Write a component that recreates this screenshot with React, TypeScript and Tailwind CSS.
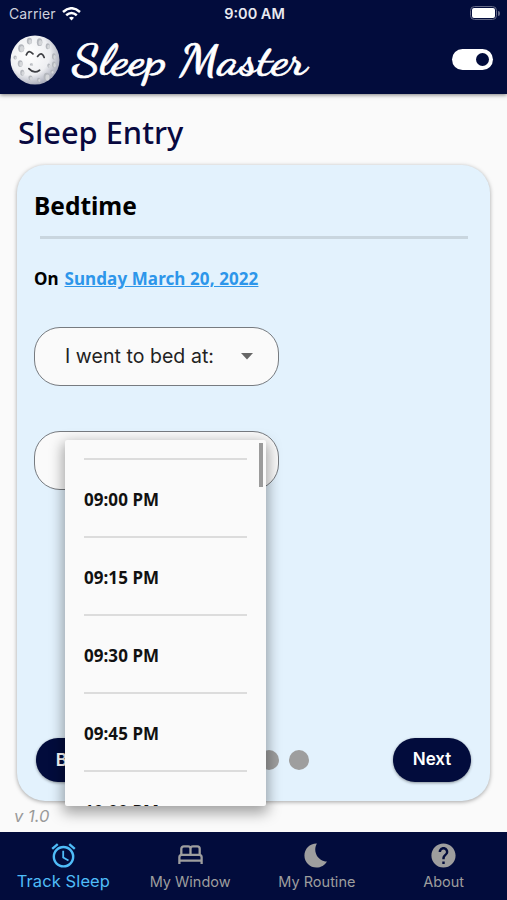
import type { ComponentType } from 'react';
import { MdAlarm, MdBedtime, MdHelp } from 'react-icons/md';
import clsx from 'clsx';

const times = ['09:00 PM', '09:15 PM', '09:30 PM', '09:45 PM', '10:00 PM'];

const BedIcon = ({ size = 24 }: { size?: number | string }) => (
  <svg width={size} height={size} viewBox="0 0 24 24" fill="none" stroke="currentColor" strokeWidth="1.9">
    <path d="M2.800 19v-5.500a2 2 0 0 1 2-2h14.400a2 2 0 0 1 2 2V19M3 16.200h18" />
    <path d="M4.400 11.500V6.500a2 2 0 0 1 2-2H10a2 2 0 0 1 2 2v5M12 11.500v-5a2 2 0 0 1 2-2h3.600a2 2 0 0 1 2 2v5" />
  </svg>
);

interface Tab {
  label: string;
  icon: ComponentType<{ size?: number | string }>;
  active?: boolean;
}

const tabs: Tab[] = [
  { label: 'Track Sleep', icon: MdAlarm, active: true },
  { label: 'My Window', icon: BedIcon },
  { label: 'My Routine', icon: MdBedtime },
  { label: 'About', icon: MdHelp },
];

const craters = [
  [19, 6, 2.5, 3.2], [29, 7, 2.7, 3.8], [11, 13, 3, 4], [37, 11, 2, 3],
  [5, 22, 1.6, 2], [43, 21, 1.8, 3], [10, 28, 2.4, 3.3], [43, 29, 1.8, 3],
  [12, 37, 2, 3], [20, 42, 2, 2.3], [36, 41, 3, 4], [28, 44, 1.5, 2],
  [38, 30, 1.4, 2], [21, 29, 1.5, 1.2], [41, 36, 1.5, 2],
];

const Moon = () => (
  <svg width="50" height="50" viewBox="0 0 49 49">
    <defs>
      <radialGradient id="moon" cx="0.38" cy="0.38" r="0.65">
        <stop offset="0" stopColor="#ffffff" />
        <stop offset="0.65" stopColor="#eeeff2" />
        <stop offset="1" stopColor="#a9acba" />
      </radialGradient>
    </defs>
    <circle cx="24.5" cy="24.5" r="24" fill="url(#moon)" />
    {craters.map(([x, y, rx, ry]) => (
      <g key={`${x}-${y}`}>
        <ellipse cx={x} cy={y} rx={rx} ry={ry} fill="#b4b7bd" />
        <ellipse cx={x + 0.7} cy={y + 0.6} rx={rx * 0.65} ry={ry * 0.7} fill="#d5d7da" />
      </g>
    ))}
    <g fill="none" stroke="#3f4045" strokeWidth="1.7" strokeLinecap="round">
      <path d="M16 19.500q2-6 6.500-1" />
      <path d="M27 21q4-5.500 6.500 1" />
      <path d="M18.500 33q5 5.500 10.500 1.500" />
    </g>
  </svg>
);

const StatusBar = () => (
  <div className="grid h-7 grid-cols-3 items-center pl-[9px] pr-[7px] font-['Inter',sans-serif] text-[14.5px] text-[#e9eaf0]">
    <div className="-mt-px flex items-center gap-[6px]">
      <span className="w-[47px] whitespace-nowrap text-[14px] tracking-[0.1px] text-[#cfd1dc]">Carrier</span>
      <svg width="19" height="14" viewBox="0 0 19 14" fill="none" stroke="#fff" strokeWidth="2.5">
        <path d="M1 5q8.500-7.500 17 0" />
        <path d="M4.200 8.300q5.300-4.600 10.600 0" />
        <path d="M7 10.800q2.500-2 5 0L9.500 13.500z" fill="#fff" stroke="none" />
      </svg>
    </div>
    <span className="text-center font-semibold">9:00 AM</span>
    <div className="-mt-[2px] flex items-center justify-end gap-px">
      <div className="h-[14px] w-[27px] rounded-[4.5px] border-[1.5px] border-[#666b88] p-px">
        <div className="h-full rounded-[2px] bg-white" />
      </div>
      <div className="h-[5px] w-[2px] rounded-r-full bg-[#666b88]" />
    </div>
  </div>
);

const Header = () => (
  <header className="z-10 h-[94px] shrink-0 bg-[#020c3c] shadow-[0_1px_4px_rgba(0,0,0,0.5)]">
    <StatusBar />
    <div className="flex h-[63px] items-center pl-[10px] pr-[14px]">
      <Moon />
      <svg width="250" height="60" className="ml-[10px]">
        <text
          x="2"
          y="44"
          textLength="235"
          lengthAdjust="spacingAndGlyphs"
          className="fill-white stroke-white stroke-[0.6px] font-['Dancing_Script','Liberation_Serif',cursive] text-[43px] font-semibold"
        >
          Sleep Master
        </text>
      </svg>
      <div className="ml-auto flex h-[21px] w-[41px] items-center justify-end rounded-full bg-white pr-[4px]">
        <div className="size-[13px] rounded-full bg-[#020c3c]" />
      </div>
    </div>
  </header>
);

const TimeMenu = () => (
  <div className="absolute left-[30px] top-[8px] z-10 h-[366px] w-[201px] rounded-[2px] bg-[#fafafa] shadow-[0_5px_14px_2px_rgba(0,0,0,0.36)]">
    <div className="h-full overflow-hidden pl-[19px] pr-[19px] pt-[18px]">
      {times.map((time) => (
        <div key={time} className="h-[78px]">
          <div className="h-[2px] bg-[#dcdcdc]" />
          <p className="pt-[26.5px] text-[17px] font-bold leading-[26px] tracking-[0.05px] text-[#111]">{time}</p>
        </div>
      ))}
    </div>
    <div className="absolute right-[3px] top-[3px] h-[44px] w-[4px] bg-[#9b9b9b]" />
  </div>
);

const SleepCard = () => (
  <section className="mx-[17px] flex h-[636px] flex-col rounded-[28px] bg-[#e3f2fd] px-[17px] shadow-[0_1px_4px_rgba(0,0,0,0.35)]">
    <h2 className="mt-[24px] text-[24.5px] font-bold leading-[34px] text-black">Bedtime</h2>
    <div className="ml-[6px] mr-[5px] mt-[13px] h-[3px] bg-[#c9d6df]" />
    <p className="mt-[27px] flex gap-[6px] text-[17px] font-bold leading-[26px] text-black">
      <span>On</span>
      <a className="tracking-[0.1px] text-[#2d96ea] underline">Sunday March 20, 2022</a>
    </p>

    <div className="mt-[35px] flex h-[59px] w-[245px] items-center justify-between rounded-[26px] border border-[#777b80] bg-[#fafafa] pl-[30px] pr-[25px]">
      <span className="font-['Inter',sans-serif] text-[19.5px] tracking-[0.05px] text-[#222]">I went to bed at:</span>
      <svg width="12" height="7" viewBox="0 0 12 7">
        <path d="M0 0h12L6 6.500z" fill="#666" />
      </svg>
    </div>

    <div className="relative mt-[45px] h-[59px] w-[245px] rounded-[26px] border border-[#777b80] bg-[#fafafa]">
      <TimeMenu />
    </div>

    <div className="mb-[19px] mt-auto flex items-center px-[2px] font-['Inter',sans-serif] text-[17.5px] font-semibold text-white">
      <div className="flex h-[44px] w-[78px] items-center justify-center rounded-full bg-[#020c3c] pl-[3px] shadow-[0_1px_3px_rgba(0,0,0,0.4)]">Back</div>
      <div className="ml-[85px] flex gap-[10px]">
        <span className="size-[20px] rounded-full bg-[#2196f3]" />
        <span className="size-[20px] rounded-full bg-[#9e9e9e]" />
        <span className="size-[20px] rounded-full bg-[#9e9e9e]" />
        <span className="size-[20px] rounded-full bg-[#9e9e9e]" />
      </div>
      <div className="ml-auto flex h-[44px] w-[78px] items-center justify-center rounded-full bg-[#020c3c] text-[17px] shadow-[0_1px_3px_rgba(0,0,0,0.4)]">Next</div>
    </div>
  </section>
);

const BottomNav = () => (
  <nav className="mt-auto grid h-[68px] shrink-0 grid-cols-4 bg-[#020c3c] font-['Inter',sans-serif]">
    {tabs.map(({ label, icon: Icon, active }) => (
      <div
        key={label}
        className={clsx(
          'flex flex-col items-center pt-[9px]',
          active ? 'text-[#4fbcf8]' : 'text-[#9e9e9e]',
        )}
      >
        <Icon size={29} />
        <span
          className={clsx(
            'whitespace-nowrap leading-[20px]',
            active ? 'mt-px text-[16.5px] tracking-[0.1px]' : 'mt-[2px] text-[14.5px]',
          )}
        >
          {label}
        </span>
      </div>
    ))}
  </nav>
);

export default function App() {
  return (
    <div className="flex h-[900px] w-[507px] flex-col overflow-hidden bg-[#fafafa] font-['Noto_Sans',sans-serif]">
      <Header />
      <h1 className="ml-[18px] mt-[16px] h-[55px] text-[30.8px] font-medium leading-[44px] text-[#08083f]">Sleep Entry</h1>
      <SleepCard />
      <p className="ml-[14px] mt-[3px] font-['Inter',sans-serif] text-[16.5px] italic leading-[24px] text-[#999]">v 1.0</p>
      <BottomNav />
    </div>
  );
}
